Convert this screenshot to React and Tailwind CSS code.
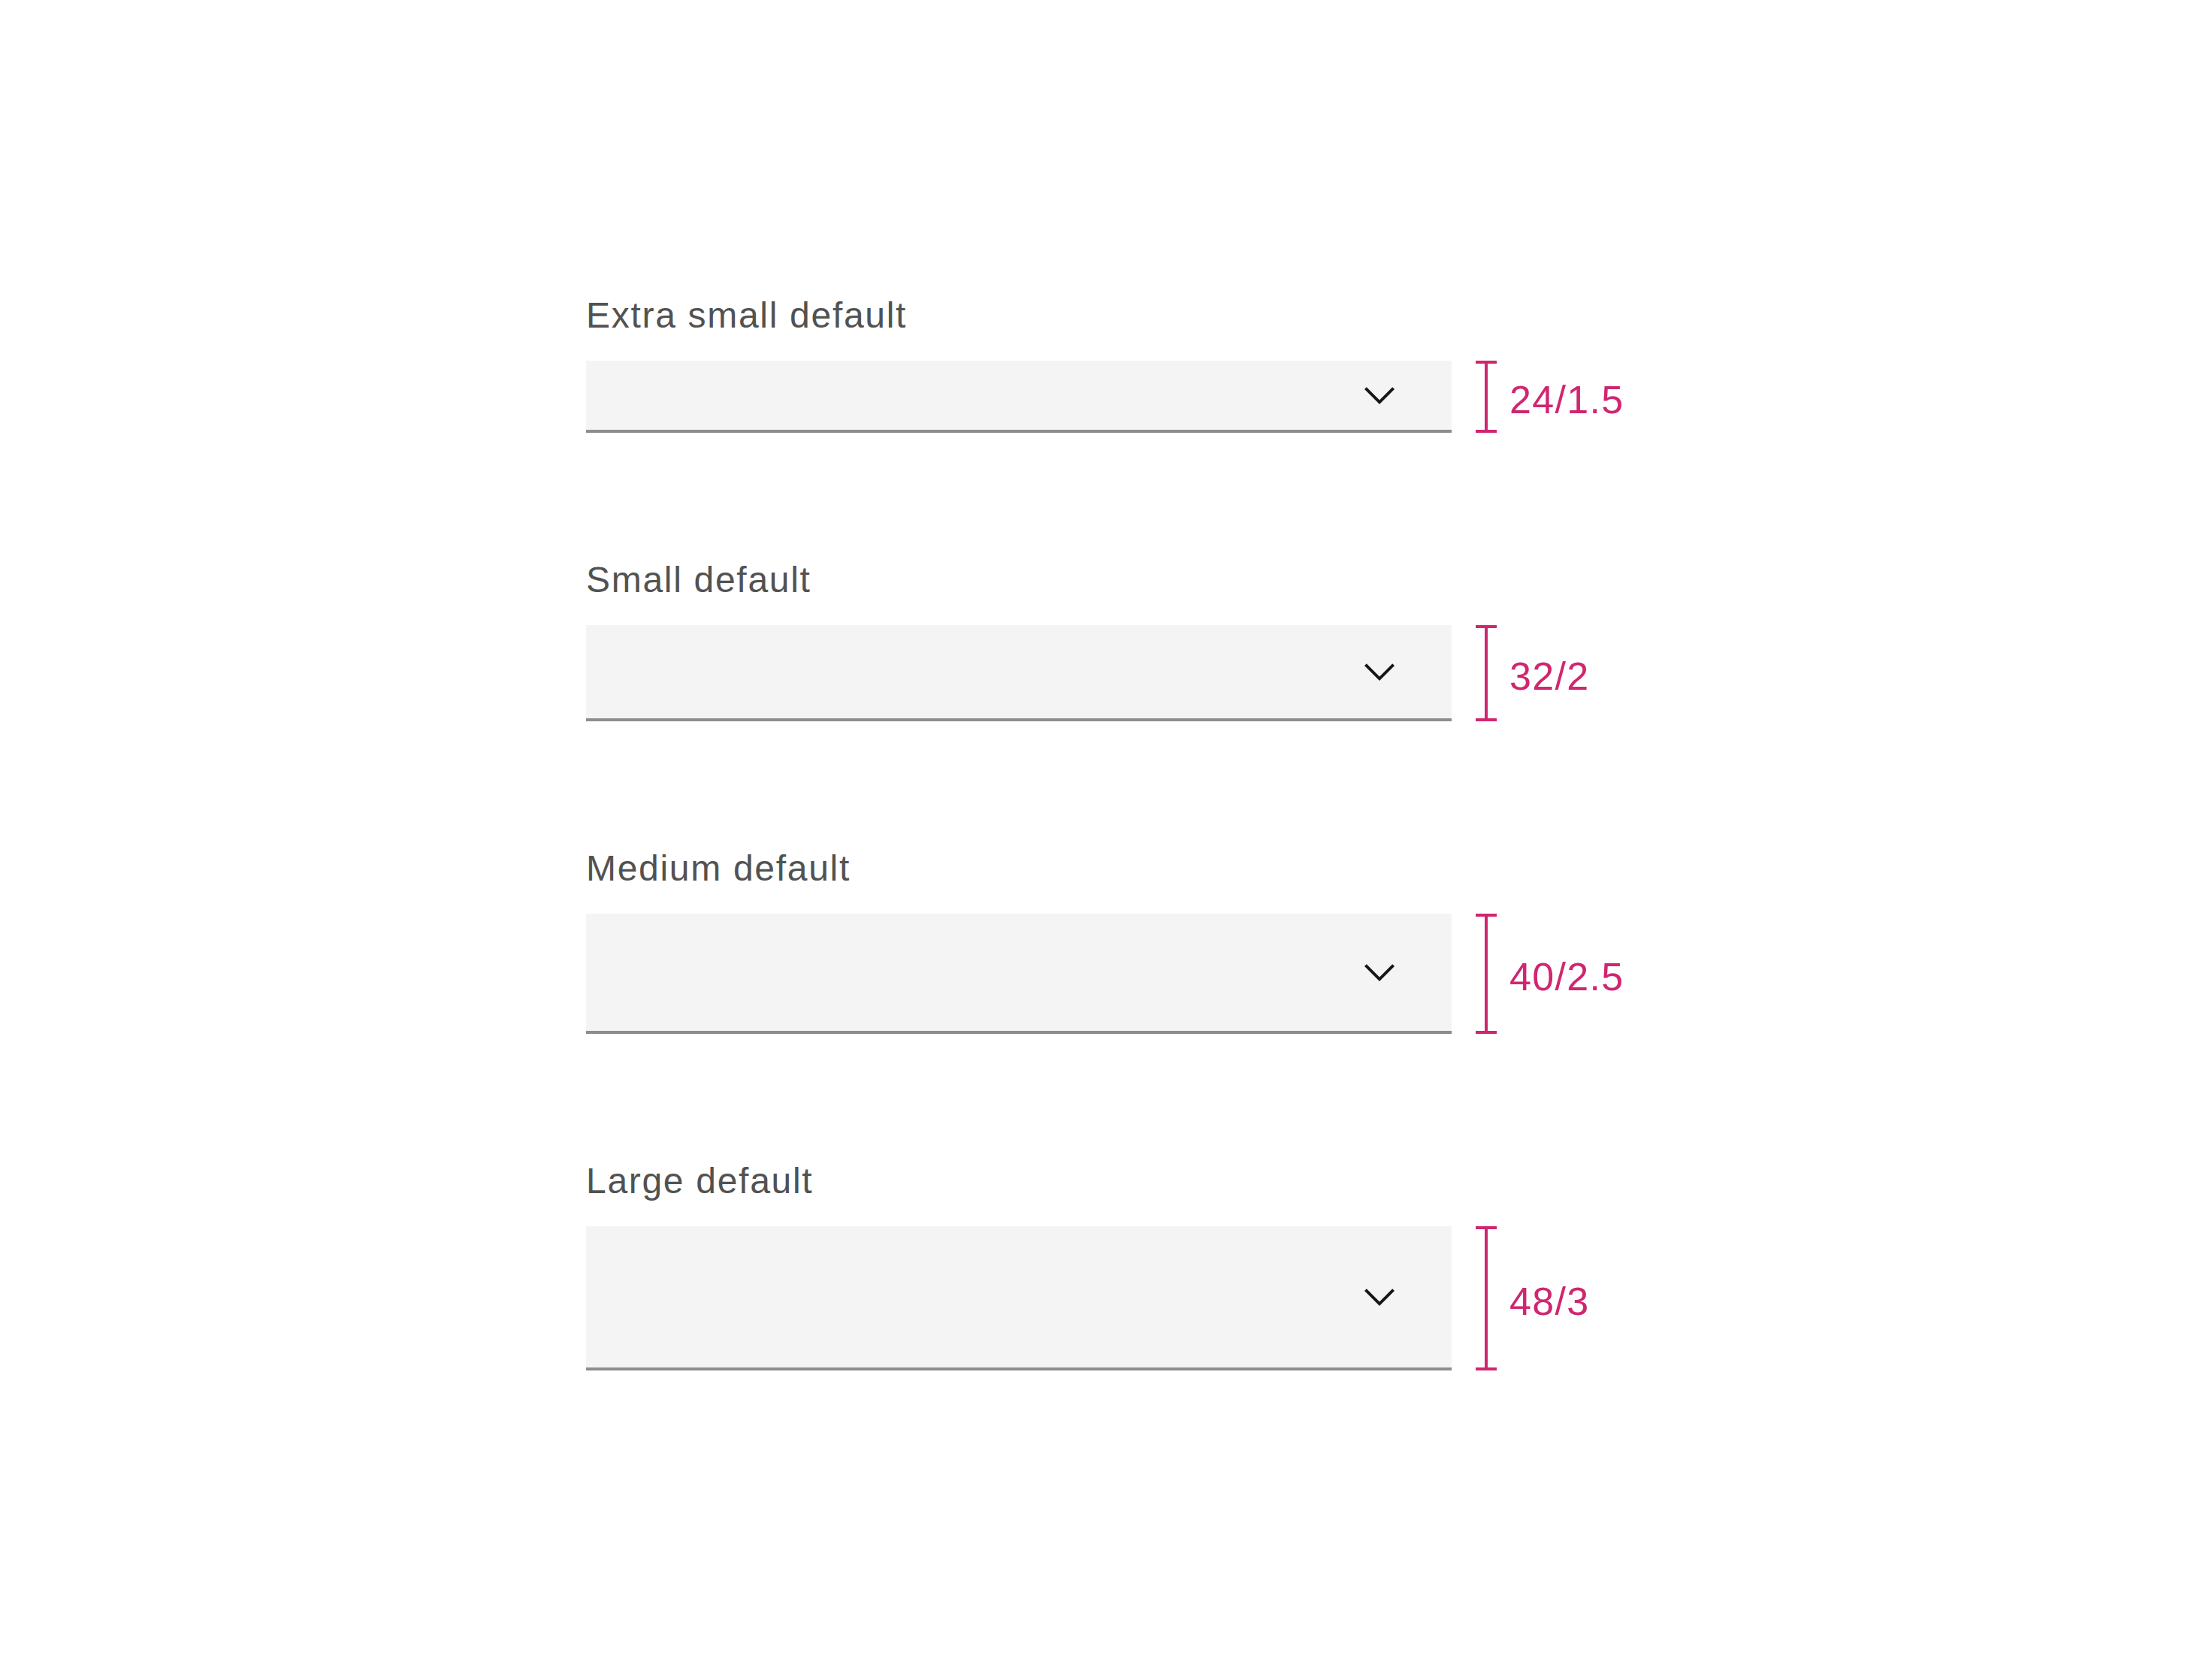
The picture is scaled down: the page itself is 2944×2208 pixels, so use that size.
import React from 'react';

const fields = [
  { label: 'Extra small default', spec: '24/1.5', height: 'h-[96px]' },
  { label: 'Small default', spec: '32/2', height: 'h-[128px]' },
  { label: 'Medium default', spec: '40/2.5', height: 'h-[160px]' },
  { label: 'Large default', spec: '48/3', height: 'h-[192px]' },
];

// Carbon chevron--down, 16px grid scaled to 64
const ChevronDown = () => (
  <svg width="64" height="64" viewBox="0 0 16 16" fill="#161616">
    <path d="M8 11L3 6 3.7 5.3 8 9.6 12.3 5.3 13 6z" />
  </svg>
);

const SizeMarker = ({ spec }) => (
  <div className="flex items-center self-stretch">
    {/* bracket */}
    <div className="ml-[32px] w-[28px] flex flex-col items-center self-stretch">
      <div className="w-[28px] h-[4px] bg-[#d02670]" />
      <div className="w-[4px] flex-1 bg-[#d02670]" />
      <div className="w-[28px] h-[4px] bg-[#d02670]" />
    </div>
    <span className="ml-[17px] pt-[8px] text-[52px] leading-none tracking-[1.3px] text-[#d02670]">{spec}</span>
  </div>
);

const Dropdown = ({ label, spec, height }) => (
  <div className="flex flex-col">
    <label className="h-[64px] pt-[8px] mb-[32px] text-[48px] leading-[56px] tracking-[1.7px] text-[#525252]">
      {label}
    </label>
    <div className="flex items-center">
      <div className={`w-[1152px] ${height} bg-[#f4f4f4] border-b-4 border-[#8d8d8d] flex items-center justify-end pr-[64px]`}>
        <ChevronDown />
      </div>
      <SizeMarker spec={spec} />
    </div>
  </div>
);

const App = () => {
  return (
    <div
      className="w-full min-h-screen bg-white flex flex-col gap-[160px] pl-[780px] pt-[384px]"
      style={{ fontFamily: '"Liberation Sans", Arial, sans-serif' }}
    >
      {fields.map((f) => (
        <Dropdown key={f.label} {...f} />
      ))}
    </div>
  );
};

export default App;
